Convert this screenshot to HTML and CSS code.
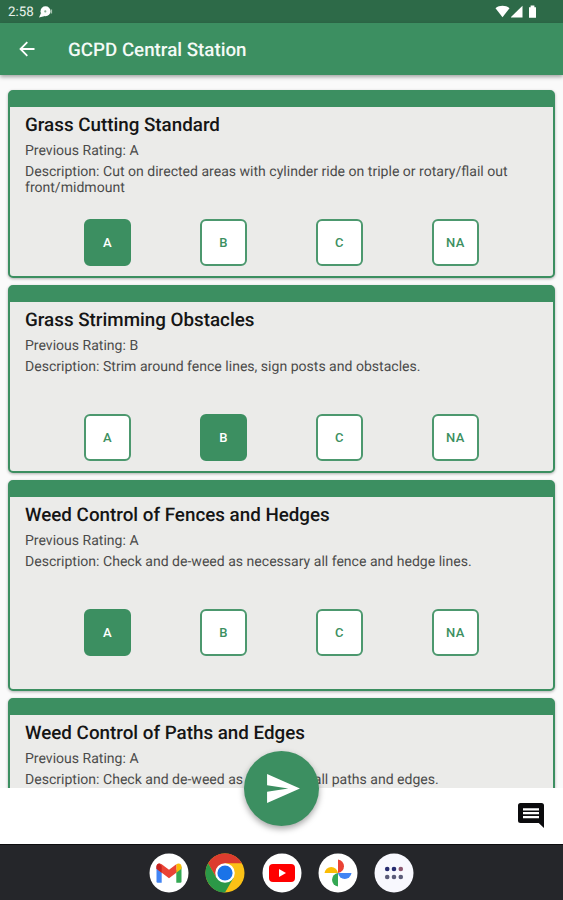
FILE: index.html
```html
<!DOCTYPE html>
<html lang="en">
<head>
<meta charset="utf-8">
<title>GCPD Central Station</title>
<link rel="stylesheet" href="styles.css">
</head>
<body>
<div class="status">
  <span class="time">2:58</span>
  <svg class="notice" width="14" height="12" viewBox="0 0 14 12"><circle cx="6.5" cy="5.3" r="5" fill="#fff"/><path d="M0 11.4 2 7l4 3z" fill="#fff"/><circle cx="6.3" cy="5.4" r="1.1" fill="#83ab92"/><path d="M12.4 3.5v4" stroke="#a5c2af" stroke-width="1.4"/></svg>
  <svg class="signals" width="44" height="14" viewBox="0 0 44 14"><path d="M.5 3.2C4.500 0 10.500 0 14.500 3.200L7.500 12.300z" fill="#fff"/><path d="M16 12.500V12L27.500.8v11.700z" fill="#fff"/><path d="M34 2.200h1.600V.5h3.800v1.700H41v10.600h-7z" fill="#fff"/></svg>
</div>
<header class="appbar">
  <svg class="back" width="16" height="16" viewBox="0 0 16 16" fill="none" stroke="#fff" stroke-width="1.800"><path d="M15.500 8H2M8.300 1.200 1.500 8l6.800 6.800"/></svg>
  <h1>GCPD Central Station</h1>
</header>
<main class="list">
  <section class="card">
    <h2>Grass Cutting Standard</h2>
    <p class="rating">Previous Rating: A</p>
    <p class="desc">Description: Cut on directed areas with cylinder ride on triple or rotary/flail out<br>front/midmount</p>
    <div class="grades"><button class="on">A</button><button>B</button><button>C</button><button>NA</button></div>
  </section>
  <section class="card">
    <h2>Grass Strimming Obstacles</h2>
    <p class="rating">Previous Rating: B</p>
    <p class="desc">Description: Strim around fence lines, sign posts and obstacles.</p>
    <div class="grades"><button>A</button><button class="on">B</button><button>C</button><button>NA</button></div>
  </section>
  <section class="card tall">
    <h2>Weed Control of Fences and Hedges</h2>
    <p class="rating">Previous Rating: A</p>
    <p class="desc">Description: Check and de-weed as necessary all fence and hedge lines.</p>
    <div class="grades"><button class="on">A</button><button>B</button><button>C</button><button>NA</button></div>
  </section>
  <section class="card">
    <h2>Weed Control of Paths and Edges</h2>
    <p class="rating">Previous Rating: A</p>
    <p class="desc">Description: Check and de-weed as necessary all paths and edges.</p>
  </section>
</main>
<footer class="actions">
  <button class="send" aria-label="Send"><svg width="33" height="29" viewBox="0 0 34 30"><path d="M0 0 34 15 0 30V18.300L22 15 0 11.700z" fill="#fff"/></svg></button>
  <svg class="comment" width="26" height="25" viewBox="0 0 26 25"><path d="M2.500 0h21Q26 0 26 2.500V25l-5.300-5H2.500Q0 20 0 17.500v-15Q0 0 2.500 0z" fill="#0b0b0d"/><path d="M5 6.300h16M5 10.200h16M5 14.100h16" stroke="#fff" stroke-width="2.300"/></svg>
</footer>
<nav class="dock">
  <svg viewBox="0 0 40 40"><circle cx="20" cy="20" r="19.500" fill="#fff"/><path d="M7.500 13.500v15q0 1.200 1.200 1.200h4V17z" fill="#4285f4"/><path d="M32.500 13.500v15q0 1.200-1.200 1.200h-4V17z" fill="#34a853"/><path d="M27.300 13.300v6.500l5.200-4v-2.300c0-3-3-4-5.200-2.200z" fill="#fbbc04"/><path d="M7.500 15.800v-2.300c0-3 3-4 5.200-2.200L20 16.700l7.300-5.400v8.500L20 25.200z" fill="#ea4335"/><path d="M7.500 15.800v-2.300c0-2 1.500-3.200 3-3.100l2.200 2.500v6.900z" fill="#c5221f"/></svg>
  <svg viewBox="0 0 40 40"><circle cx="20" cy="20" r="19.500" fill="#fbc116"/><path d="M3.110 10.250A19.500 19.500 0 0 1 36.890 10.250H20L11.560 24.880z" fill="#dc3c2e"/><path d="M3.110 10.250A19.500 19.500 0 0 0 20 39.500L28.440 24.880H11.560z" fill="#2b9847"/><circle cx="20" cy="20" r="9.750" fill="#fff"/><circle cx="20" cy="20" r="7.600" fill="#1a73e8"/></svg>
  <svg viewBox="0 0 40 40"><circle cx="20" cy="20" r="19.500" fill="#fff"/><rect x="7" y="11" width="26" height="18" rx="4" fill="#f00"/><path d="M17 16v8l7-4z" fill="#fff"/></svg>
  <svg viewBox="0 0 40 40"><circle cx="20" cy="20" r="19.500" fill="#fff"/><path d="M20 6.500a6.800 6.800 0 0 1 0 13.500z" fill="#ea4335"/><path d="M33.500 20a6.800 6.800 0 0 1-13.500 0z" fill="#4285f4"/><path d="M20 33.500a6.800 6.800 0 0 1 0-13.500z" fill="#34a853"/><path d="M6.500 20a6.800 6.800 0 0 1 13.500 0z" fill="#fbbc04"/></svg>
  <svg viewBox="0 0 40 40"><circle cx="20" cy="20" r="19.500" fill="#f8f8fe"/><g fill="#272c70"><circle cx="13.200" cy="16" r="2.300"/><circle cx="20" cy="16" r="2.300"/></g><circle cx="26.800" cy="16" r="2.300" fill="#8c5770"/><g fill="#5b5c79"><circle cx="13.200" cy="24" r="2.300"/><circle cx="20" cy="24" r="2.300"/><circle cx="26.800" cy="24" r="2.300"/></g></svg>
</nav>
</body>
</html>
```
FILE: styles.css
```css
* { box-sizing: border-box; }
body {
  margin: 0;
  width: 563px;
  height: 900px;
  overflow: hidden;
  display: flex;
  flex-direction: column;
  font-family: Roboto, sans-serif;
  text-rendering: geometricPrecision;
  background: #fafafa;
}
h1, h2, p { margin: 0; font-weight: 400; white-space: nowrap; }
button { font: inherit; padding: 0; border: 0; }
svg { display: block; flex: none; }
.status {
  height: 23px;
  flex: none;
  display: flex;
  align-items: center;
  padding: 2px 24px 0 8px;
  background: #2d6a48;
  color: #e9f2ec;
}
.time { font-size: 13.300px; width: 31px; }
.notice { margin-top: -1px; }
.signals { margin-left: auto; margin-top: -1px; }
.appbar {
  height: 52px;
  flex: none;
  display: flex;
  align-items: center;
  padding-left: 19px;
  background: #3c8f61;
  color: #f4faf6;
  box-shadow: 0 2px 4px rgba(0, 0, 0, .35);
  z-index: 1;
}
.appbar h1 { margin: 2px 0 0 33px; font-size: 18.750px; font-weight: 500; }
.list {
  height: 713px;
  flex: none;
  overflow: hidden;
  padding: 15px 8px 0;
  display: flex;
  flex-direction: column;
  gap: 7px;
}
.card {
  height: 188px;
  flex: none;
  padding: 8px 15px 0;
  border: 2px solid #3c8f61;
  border-top-width: 17px;
  border-radius: 5px;
  background: #ebebe9;
  color: #4b4b4b;
  box-shadow: 0 1px 3px rgba(0, 0, 0, .3);
}
.card.tall { height: 211px; }
.card h2 { font-size: 18.800px; line-height: 20px; font-weight: 500; color: #151515; }
.rating, .desc { font-size: 14.050px; line-height: 16px; }
.rating { margin-top: 8px; }
.desc { margin-top: 5px; height: 33px; }
.grades { display: flex; gap: 69px; margin: 22px 0 0 59px; }
.grades button {
  width: 47px;
  height: 47px;
  border: 2px solid #4c986e;
  border-radius: 6px;
  background: #fff;
  color: #3c8f61;
  font-size: 13px;
  font-weight: 500;
  letter-spacing: .4px;
}
.grades .on { background: #3c8f61; border-color: #3c8f61; color: #fff; }
.actions {
  position: relative;
  height: 56px;
  flex: none;
  display: flex;
  align-items: center;
  justify-content: flex-end;
  padding: 0 19px 1px 0;
  background: #fff;
}
.send {
  position: absolute;
  left: 244px;
  top: -37px;
  width: 75px;
  height: 75px;
  border-radius: 50%;
  background: #3c8f61;
  display: flex;
  align-items: center;
  justify-content: center;
  padding: 0 0 1px 4px;
  box-shadow: 0 3px 6px rgba(0, 0, 0, .35);
}
.dock {
  height: 56px;
  flex: none;
  display: flex;
  align-items: center;
  justify-content: center;
  gap: 16.200px;
  background: #25262a;
  border-top: 1px solid #0d0d0f;
}
.dock svg { width: 40px; height: 40px; }
```
